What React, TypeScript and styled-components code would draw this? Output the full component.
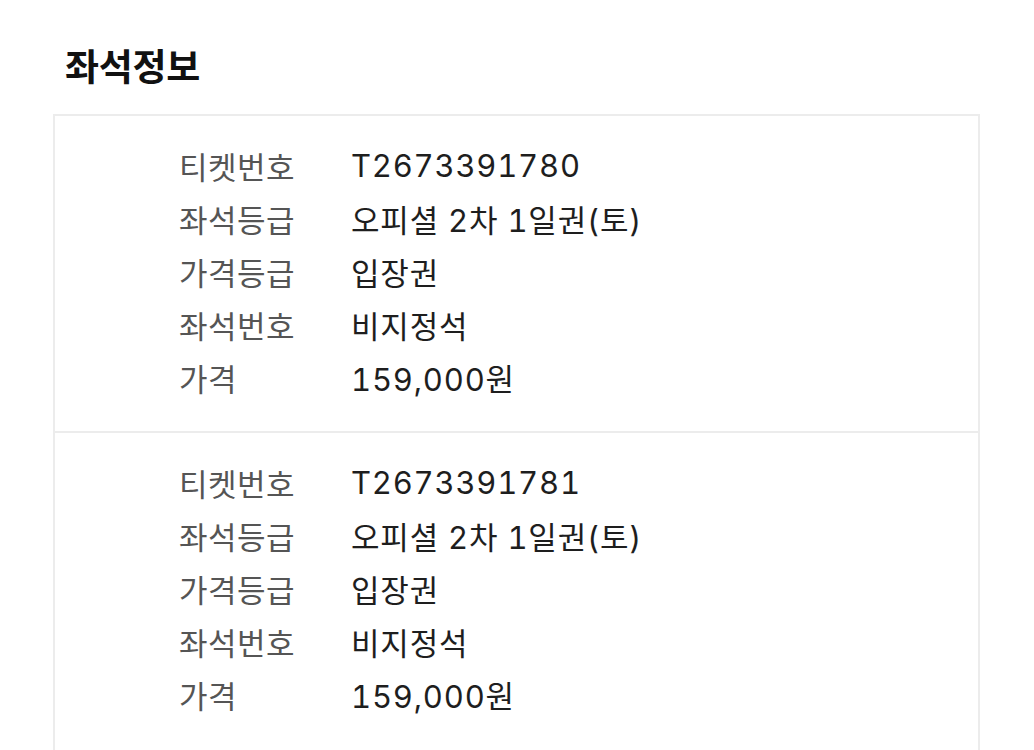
import React from "react";
import styled, { createGlobalStyle } from "styled-components";

const Global = createGlobalStyle`
  html, body { margin: 0; padding: 0; background: #fff; }
  body { font-family: "Noto Sans CJK KR", "Noto Sans", sans-serif; }
`;

const Page = styled.div`
  padding: 42px 54px 0 53px;
  width: 927px;
`;

const Title = styled.h2`
  margin: 0 0 26px 12px;
  font-size: 37px;
  font-weight: 700;
  color: #111;
  line-height: 46px;
  letter-spacing: -0.3px;
`;

const Box = styled.div`
  border: 2px solid #ececec;
`;

const Section = styled.div<{ $first?: boolean }>`
  padding: 23px 0 ${(p) => (p.$first ? "27px" : "80px")} 124px;
  border-top: ${(p) => (p.$first ? "none" : "2px solid #ececec")};
`;

const Row = styled.div`
  display: grid;
  grid-template-columns: 172px 1fr;
  height: 53px;
  align-items: center;
  font-family: "Inter", "Noto Sans CJK KR", sans-serif;
  font-size: 31px;
`;

const Label = styled.span`
  color: #555;
  letter-spacing: 0.5px;
`;

const Value = styled.span`
  color: #1e1e1e;
  letter-spacing: 0.8px;
  font-variant-numeric: tabular-nums;
`;

const tickets = [
  ["T2673391780", "오피셜 2차 1일권(토)", "입장권", "비지정석", "159,000원"],
  ["T2673391781", "오피셜 2차 1일권(토)", "입장권", "비지정석", "159,000원"],
];
const labels = ["티켓번호", "좌석등급", "가격등급", "좌석번호", "가격"];

export default function App() {
  return (
    <>
      <Global />
      <Page>
        <Title>좌석정보</Title>
        <Box>
          {tickets.map((t, i) => (
            <Section key={i} $first={i === 0}>
              {labels.map((l, j) => (
                <Row key={l}>
                  <Label>{l}</Label>
                  <Value>{t[j]}</Value>
                </Row>
              ))}
            </Section>
          ))}
        </Box>
      </Page>
    </>
  );
}
